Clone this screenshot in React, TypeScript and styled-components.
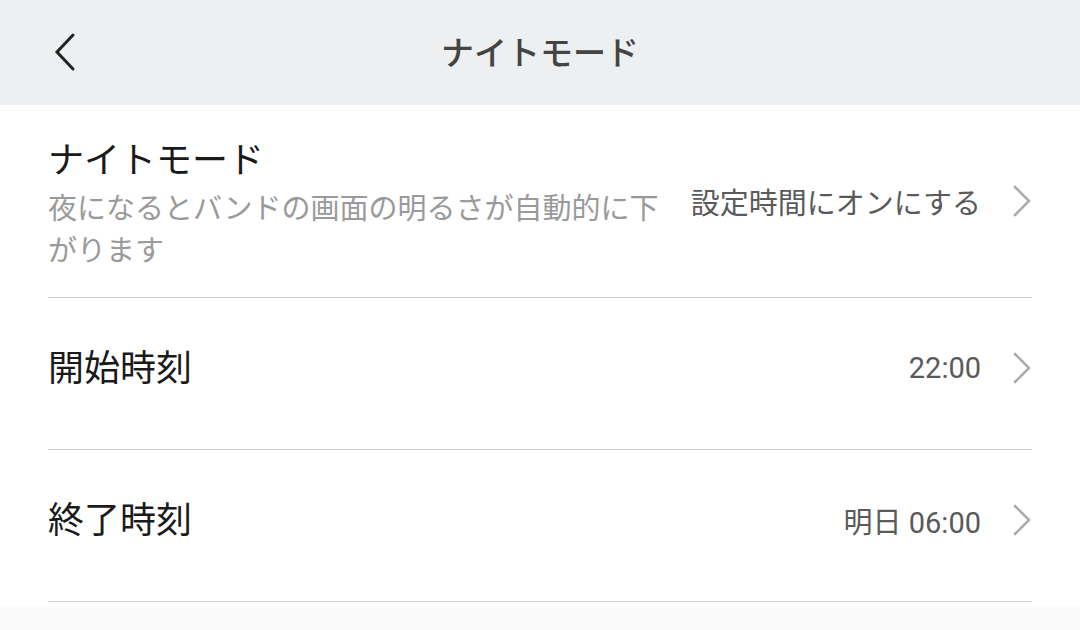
import React from "react";
import styled, { createGlobalStyle } from "styled-components";

const Global = createGlobalStyle`
  html, body { margin: 0; padding: 0; background: #fafafa; }
  body { font-family: Roboto, "Noto Sans CJK JP", sans-serif; }
`;

const Page = styled.div`
  width: 1080px;
  height: 630px;
  background: #fafafa;
  overflow: hidden;
`;

const Header = styled.header`
  height: 105px;
  background: #eeeff1;
  display: flex;
  align-items: center;
  justify-content: center;
  position: relative;
`;

const BackButton = styled.button`
  position: absolute;
  left: 44px;
  top: 28px;
  width: 40px;
  height: 48px;
  border: none;
  background: none;
  padding: 0;
  display: flex;
  align-items: center;
  justify-content: center;
`;

const HeaderTitle = styled.h1`
  margin: 0;
  font-family: "Noto Sans CJK JP", sans-serif;
  font-size: 33px;
  font-weight: 500;
  color: #444;
  transform: translateY(-2px);
`;

const List = styled.div`
  background: #fff;
  padding: 0 48px 4px;
`;

const Row = styled.div<{ $height: number; $lift?: number }>`
  height: ${(p) => p.$height}px;
  padding-bottom: ${(p) => p.$lift ?? 0}px;
  display: flex;
  align-items: center;
  border-bottom: 1px solid #cfcfcf;
  box-sizing: border-box;
`;

const Left = styled.div`
  flex: 1;
  min-width: 0;
  display: flex;
  flex-direction: column;
`;

const Title = styled.div<{ $raise?: number }>`
  font-family: "Noto Sans CJK JP", sans-serif;
  font-size: 36px;
  color: #1a1a1a;
  line-height: 48px;
  margin-bottom: ${(p) => p.$raise ?? 0}px;
`;

const Sub = styled.div`
  font-family: "Noto Sans CJK JP", sans-serif;
  font-size: 29px;
  color: #9a9a9a;
  line-height: 42px;
  margin-top: 4px;
  max-width: 620px;
`;

const Right = styled.div`
  display: flex;
  align-items: center;
  flex: none;
  padding-left: 30px;
`;

const Value = styled.span`
  font-family: Roboto, "Noto Sans CJK JP", sans-serif;
  font-size: 29px;
  color: #5a5a5a;
  margin-right: 31px;
`;

const Chevron = () => (
  <svg width="20" height="32" viewBox="0 0 20 32">
    <polyline
      points="3,2 17,16 3,30"
      fill="none"
      stroke="#acacac"
      strokeWidth="2.6"
      strokeLinecap="round"
      strokeLinejoin="miter"
    />
  </svg>
);

const BackIcon = () => (
  <svg width="26" height="40" viewBox="0 0 26 40">
    <polyline
      points="22,3 6,20 22,37"
      fill="none"
      stroke="#222"
      strokeWidth="3"
      strokeLinecap="round"
      strokeLinejoin="miter"
    />
  </svg>
);

export default function App() {
  return (
    <>
      <Global />
      <Page>
        <Header>
          <BackButton aria-label="back">
            <BackIcon />
          </BackButton>
          <HeaderTitle>ナイトモード</HeaderTitle>
        </Header>
        <List>
          <Row $height={193}>
            <Left>
              <Title>ナイトモード</Title>
              <Sub>夜になるとバンドの画面の明るさが自動的に下がります</Sub>
            </Left>
            <Right>
              <Value>設定時間にオンにする</Value>
              <Chevron />
            </Right>
          </Row>
          <Row $height={152} $lift={12}>
            <Left>
              <Title $raise={6}>開始時刻</Title>
            </Left>
            <Right>
              <Value>22:00</Value>
              <Chevron />
            </Right>
          </Row>
          <Row $height={152} $lift={12}>
            <Left>
              <Title $raise={6}>終了時刻</Title>
            </Left>
            <Right>
              <Value>明日 06:00</Value>
              <Chevron />
            </Right>
          </Row>
        </List>
      </Page>
    </>
  );
}
